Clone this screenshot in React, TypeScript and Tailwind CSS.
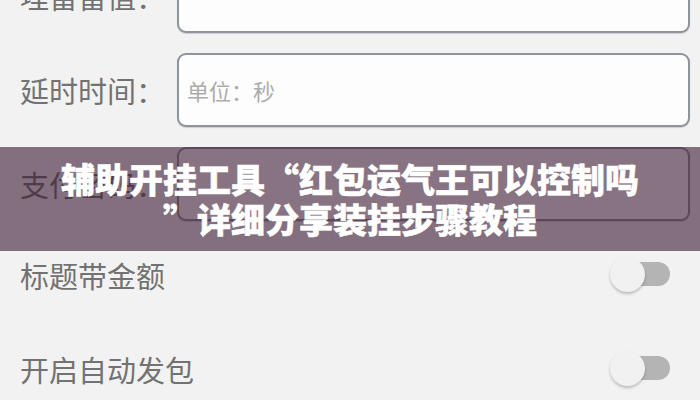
import type { ReactNode } from 'react';

const cjk = "font-['Noto_Sans_CJK_SC','Noto_Sans',sans-serif]";

function FieldRow({ label, placeholder, className = '' }: { label: string; placeholder?: string; className?: string }) {
  return (
    <div className={`flex items-center ${className}`}>
      <span className="w-[157px] shrink-0 text-[29px] leading-none text-[#727272]">{label}</span>
      <div className="flex h-[74px] w-[513px] items-center rounded-[9px] border-2 border-[#8f939b] bg-[#fdfdfd] px-[8px] shadow-[0_1px_1px_rgba(0,0,0,0.15)]">
        {placeholder && <span className="text-[22px] text-[#ababab]">{placeholder}</span>}
      </div>
    </div>
  );
}

function Toggle() {
  return (
    <div className="relative h-[36px] w-[60px]">
      <div className="absolute right-0 top-[5px] h-[24px] w-[46px] rounded-full bg-[#b4b4b4]" />
      <div className="absolute left-0 top-0 h-[35px] w-[35px] rounded-full bg-[#f1f1f1] shadow-[0_2px_3px_rgba(0,0,0,0.22)]" />
    </div>
  );
}

function SwitchRow({ label, children }: { label: string; children: ReactNode }) {
  return (
    <div className="flex h-[94px] items-center justify-between">
      <span className="text-[29px] leading-none text-[#727272]">{label}</span>
      {children}
    </div>
  );
}

export default function App() {
  return (
    <div className={`relative h-[400px] w-[700px] overflow-hidden bg-[#f2f2f2] ${cjk}`}>
      <div className="flex flex-col px-5 pr-[10px]">
        <div className="-mt-[41px] flex flex-col gap-5">
          <FieldRow label="埋雷雷值：" />
          <FieldRow label="延时时间：" placeholder="单位：秒" />
          <FieldRow label="支付密码：" />
        </div>
        <div className="mt-[7px] pr-[20px]">
          <SwitchRow label="标题带金额">
            <Toggle />
          </SwitchRow>
          <SwitchRow label="开启自动发包">
            <Toggle />
          </SwitchRow>
        </div>
      </div>

      {/* title banner */}
      <div className="absolute left-0 right-0 top-[147px] flex h-[104px] items-center justify-center bg-[rgba(57,24,49,0.6)]">
        <h1 className="text-center text-[34px] font-black leading-[40px] text-white [-webkit-text-stroke:0.5px_white]">
          辅助开挂工具“红包运气王可以控制吗
          <br />
          ”详细分享装挂步骤教程
        </h1>
      </div>
    </div>
  );
}
